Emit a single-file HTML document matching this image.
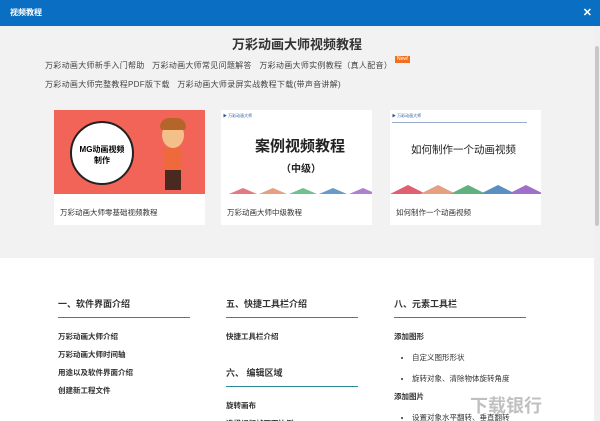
<!DOCTYPE html>
<html><head><meta charset="utf-8"><style>
*{margin:0;padding:0;box-sizing:border-box}
html,body{width:600px;height:421px;overflow:hidden}
body{background:#fff;font-family:"Liberation Sans","Noto Sans CJK SC",sans-serif;position:relative}
.hdr{position:absolute;left:0;top:0;width:600px;height:26px;background:#0a6fc2;color:#fff;font-size:8px;font-weight:bold;line-height:26px;padding-left:10px}
.hdr .x{position:absolute;right:8px;top:0;font-size:11px}
.top{position:absolute;left:0;top:26px;width:594px;height:232px;background:#f2f2f2}
.sb{position:absolute;left:594px;top:26px;width:6px;height:395px;background:#f0f0f0}
.sb i{position:absolute;left:1px;top:20px;width:4px;height:180px;background:#c8c8c8;border-radius:2px}
h1{position:absolute;top:34px;left:0;width:594px;text-align:center;font-size:13px;color:#333;font-weight:bold}
.lk{position:absolute;left:45px;font-size:8px;color:#444;white-space:nowrap;letter-spacing:0.3px}
.new{position:absolute;left:395px;top:56px;background:#f07020;color:#fff;font-size:5px;padding:0 2px;line-height:7px}
.card{position:absolute;top:110px;width:151px;height:115px;background:#fff}
.card .im{height:84px;position:relative;overflow:hidden;background:#fff}
.card .cap{font-size:7.5px;color:#333;padding:13px 0 0 6px}
.col{position:absolute;top:297px;width:132px}
.col h3{font-size:9px;color:#333;font-weight:bold;height:21px;border-bottom:1.5px solid #2a8a9a;margin-bottom:14px}
.col p{font-size:7.5px;color:#333;margin-top:8px;line-height:10px;font-weight:bold}
.col ul{list-style:disc}
.col li{font-size:7.5px;color:#333;margin:11px 0 0 18px;line-height:10px}
.tri{position:absolute;bottom:0;width:0;height:0;border-left:14px solid transparent;border-right:14px solid transparent}
</style></head><body>
<div class="hdr">视频教程<span class="x">✕</span></div>
<div class="top"></div>
<div class="sb"><i></i></div>
<h1>万彩动画大师视频教程</h1>
<div class="lk" style="top:60px">万彩动画大师新手入门帮助 &nbsp; 万彩动画大师常见问题解答 &nbsp; 万彩动画大师实例教程（真人配音）</div>
<div class="new">New!</div>
<div class="lk" style="top:79px">万彩动画大师完整教程PDF版下载 &nbsp; 万彩动画大师录屏实战教程下载(带声音讲解)</div>

<div class="card" style="left:54px"><div class="im" style="background:#f26457">
<div style="position:absolute;left:16px;top:11px;width:64px;height:64px;border-radius:50%;background:#fff;border:2px solid #222;text-align:center;font-size:8px;font-weight:bold;padding-top:21px;line-height:11px">MG动画视频<br>制作</div>
<div style="position:absolute;left:108px;top:12px;width:22px;height:26px;border-radius:50%;background:#f4c08a"></div>
<div style="position:absolute;left:106px;top:8px;width:26px;height:12px;border-radius:12px 12px 4px 4px;background:#b5652a"></div>
<div style="position:absolute;left:110px;top:38px;width:18px;height:22px;background:#ee6a3c"></div>
<div style="position:absolute;left:111px;top:60px;width:16px;height:20px;background:#4a2a20"></div>
</div><div class="cap">万彩动画大师零基础视频教程</div></div>

<div class="card" style="left:221px"><div class="im">
<div style="position:absolute;left:2px;top:3px;font-size:4px;color:#2a5a9a">▶ 万彩动画大师</div>
<div style="position:absolute;left:34px;top:25px;font-size:15px;font-weight:bold;color:#222">案例视频教程</div>
<div style="position:absolute;left:60px;top:50px;font-size:10px;font-weight:bold;color:#222">（中级）</div>
<div class="tri" style="left:8px;border-bottom:6px solid #e47a80"></div>
<div class="tri" style="left:38px;border-bottom:6px solid #e4a080"></div>
<div class="tri" style="left:68px;border-bottom:6px solid #70c090"></div>
<div class="tri" style="left:98px;border-bottom:6px solid #6a9ac8"></div>
<div class="tri" style="left:128px;border-bottom:6px solid #b080d0"></div>
</div><div class="cap">万彩动画大师中级教程</div></div>

<div class="card" style="left:390px"><div class="im">
<div style="position:absolute;left:2px;top:3px;font-size:4px;color:#2a5a9a">▶ 万彩动画大师</div>
<div style="position:absolute;left:2px;top:12px;width:135px;height:1px;background:#9ac"></div>
<div style="position:absolute;left:21px;top:32px;font-size:10.5px;color:#222">如何制作一个动画视频</div>
<div class="tri" style="left:0;border-left-width:18px;border-right-width:18px;border-bottom:9px solid #e06070"></div>
<div class="tri" style="left:30px;border-left-width:18px;border-right-width:18px;border-bottom:9px solid #e4a080"></div>
<div class="tri" style="left:60px;border-left-width:18px;border-right-width:18px;border-bottom:9px solid #60b080"></div>
<div class="tri" style="left:90px;border-left-width:18px;border-right-width:18px;border-bottom:9px solid #5a90c0"></div>
<div class="tri" style="left:118px;border-left-width:18px;border-right-width:18px;border-bottom:9px solid #a070c8"></div>
</div><div class="cap">如何制作一个动画视频</div></div>

<div class="col" style="left:58px"><h3>一、软件界面介绍</h3>
<p>万彩动画大师介绍</p><p>万彩动画大师时间轴</p><p>用途以及软件界面介绍</p><p>创建新工程文件</p></div>
<div class="col" style="left:226px"><h3>五、快捷工具栏介绍</h3>
<p>快捷工具栏介绍</p>
<h3 style="margin-top:24px">六、 编辑区域</h3>
<p>旋转画布</p><p>选择视频帧画面比例</p></div>
<div class="col" style="left:394px"><h3>八、元素工具栏</h3>
<p>添加图形</p><ul><li>自定义图形形状</li><li>旋转对象、清除物体旋转角度</li></ul>
<p>添加图片</p><ul><li>设置对象水平翻转、垂直翻转</li></ul></div>
<div style="position:absolute;left:470px;top:392px;font-size:18px;font-weight:bold;color:rgba(150,150,150,.6)">下载银行</div>
</body></html>
